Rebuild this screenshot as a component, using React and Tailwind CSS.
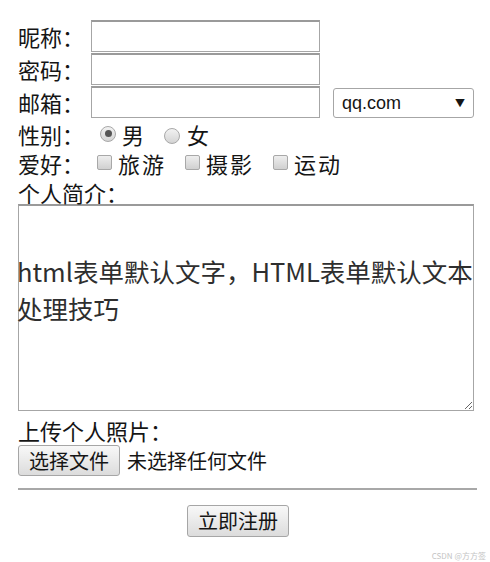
import React, { useState } from 'react';

const font = { fontFamily: '"Noto Sans CJK SC", "Noto Sans", sans-serif' };

const Radio = ({ checked, onClick }) => (
    <span
        onClick={onClick}
        className="inline-flex items-center justify-center w-[16px] h-[16px] rounded-full border border-[#a8a8a8] bg-gradient-to-b from-[#f2f2f2] to-[#d4d4d4] cursor-pointer"
    >
        {checked && <span className="w-[7px] h-[7px] rounded-full bg-[#555]" />}
    </span>
);

const Checkbox = ({ checked, onClick }) => (
    <span
        onClick={onClick}
        className="inline-flex items-center justify-center w-[15px] h-[15px] rounded-[2px] border border-[#a8a8a8] bg-gradient-to-b from-[#eeeeee] to-[#d0d0d0] cursor-pointer text-[10px] leading-none text-[#333]"
    >
        {checked ? '✓' : ''}
    </span>
);

const TextInput = ({ type = 'text' }) => (
    <input
        type={type}
        className="w-[229px] h-[32px] border border-[#a6a6a6] border-t-2 border-t-[#9a9a9a] bg-white px-1 outline-none"
    />
);

const App = () => {
    const [sex, setSex] = useState('男');
    const [hobbies, setHobbies] = useState({});

    const toggleHobby = (name) => setHobbies({ ...hobbies, [name]: !hobbies[name] });

    return (
        <div className="relative w-[490px] h-[562px] bg-white text-[#151515] overflow-hidden" style={font}>
            <div className="pt-[20px] pl-[18px] text-[22px] leading-none">
                <div className="flex items-center h-[32px]">
                    <span className="w-[73px]">昵称：</span>
                    <TextInput />
                </div>
                <div className="flex items-center h-[33px]">
                    <span className="w-[73px]">密码：</span>
                    <TextInput type="password" />
                </div>
                <div className="flex items-center h-[33px]">
                    <span className="w-[73px]">邮箱：</span>
                    <TextInput />
                    <div className="relative ml-[13px] mt-[2px]">
                        <select className="appearance-none w-[141px] h-[30px] border border-[#a6a6a6] rounded-[3px] bg-white pl-[8px] text-[18px] outline-none" style={{ fontFamily: '"Liberation Sans", Arial, sans-serif' }}>
                            <option>qq.com</option>
                            <option>163.com</option>
                            <option>sina.com</option>
                        </select>
                        <span className="absolute right-[9px] top-[10px] text-[10px] leading-none pointer-events-none">▼</span>
                    </div>
                </div>

                <div className="flex items-center h-[29px] mt-[1px]">
                    <span className="w-[82px]">性别：</span>
                    <Radio checked={sex === '男'} onClick={() => setSex('男')} />
                    <span className="ml-[6px]">男</span>
                    <span className="ml-[20px]"><Radio checked={sex === '女'} onClick={() => setSex('女')} /></span>
                    <span className="ml-[7px]">女</span>
                </div>

                <div className="flex items-center h-[29px]">
                    <span className="w-[79px]">爱好：</span>
                    {['旅游', '摄影', '运动'].map((h, i) => (
                        <span key={h} className={`flex items-center ${i > 0 ? 'ml-[19px]' : ''}`}>
                            <Checkbox checked={!!hobbies[h]} onClick={() => toggleHobby(h)} />
                            <span className="ml-[6px] tracking-[2px]">{h}</span>
                        </span>
                    ))}
                </div>

                <div className="relative z-10 h-[26px] flex items-center pt-[3px]">个人简介：</div>

                <div className="relative mt-[1px]">
                    <textarea className="block w-[456px] h-[207px] border border-[#a6a6a6] border-t-2 border-t-[#9a9a9a] bg-white outline-none" />
                    <div className="absolute left-[-1px] top-[48px] w-[462px] text-[25.5px] leading-[37px] text-[#2e2e2e] pointer-events-none">
                        html表单默认文字，HTML表单默认文本处理技巧
                    </div>
                </div>

                <div className="h-[34px] flex items-center pt-[3px]">上传个人照片：</div>

                <div className="flex items-center text-[20px]">
                    <button className="w-[102px] h-[31px] border border-[#a6a6a6] rounded-[3px] bg-gradient-to-b from-[#f8f8f8] to-[#dcdcdc]">
                        选择文件
                    </button>
                    <span className="ml-[7px]">未选择任何文件</span>
                </div>

                <div className="w-[459px] mt-[12px] border-t-2 border-[#a8a8a8]" />

                <button className="ml-[169px] mt-[15px] w-[102px] h-[32px] border border-[#a6a6a6] rounded-[3px] bg-gradient-to-b from-[#f8f8f8] to-[#dcdcdc] text-[20px]">
                    立即注册
                </button>
            </div>

            <div className="absolute right-[4px] bottom-[2px] text-[8px] leading-none text-[#c4c4c4]">CSDN @方方签</div>
        </div>
    );
};

export default App;
